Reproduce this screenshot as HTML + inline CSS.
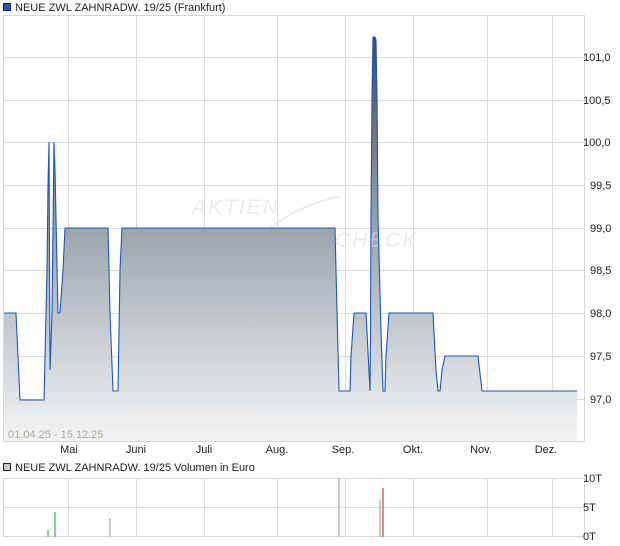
<!DOCTYPE html>
<html><head><meta charset="utf-8"><style>
html,body{margin:0;padding:0;background:#fff;}
svg{display:block;font-family:"Liberation Sans",sans-serif;}
</style></head><body>
<svg width="620" height="546" viewBox="0 0 620 546" xmlns="http://www.w3.org/2000/svg">
<defs>
<linearGradient id="g" gradientUnits="userSpaceOnUse" x1="0" y1="35" x2="0" y2="442">
<stop offset="0" stop-color="#3d4a54"/>
<stop offset="0.47" stop-color="#9aa4ab"/>
<stop offset="1" stop-color="#f4f5f6"/>
</linearGradient>
</defs>
<rect x="3.5" y="3.5" width="7" height="7" fill="#1a56c4" stroke="#222" stroke-width="1"/>
<text x="15" y="11" font-size="11" fill="#222">NEUE ZWL ZAHNRADW. 19/25 (Frankfurt)</text>
<g stroke="#dcdcdc" stroke-width="1">
<path d="M68.5 15V442M136.5 15V442M204.5 15V442M277.5 15V442M345.5 15V442M413.5 15V442M487.5 15V442M552.5 15V442"/>
<path d="M3 57.5H585M3 100.5H585M3 142.5H585M3 185.5H585M3 228.5H585M3 270.5H585M3 313.5H585M3 356.5H585M3 399.5H585"/>
</g>
<rect x="3.5" y="15.5" width="581" height="426" fill="none" stroke="#d6d6d6"/>
<path d="M4 313 L16 313 L20 400 L44 400 L46 313 L47 270 L48 185 L49 142 L50 370 L52 313 L54 142 L55 170 L58 313 L60 313 L63 270 L65 228 L108 228 L110 313 L113 391 L118 391 L120 270 L122 228 L335 228 L336 270 L339 391 L350 391 L351 356 L354 313 L366 313 L367 332 L370 391 L370.5 332 L371 213 L372 96 L373 37 L375 37 L376 40 L377 96 L378 216 L381 332 L383 391 L385 391 L386 356 L389 313 L433 313 L436 370 L438 391 L440 391 L442 370 L445 356 L478 356 L482 391 L577 391 L577 441 L4 441Z" fill="url(#g)"/>
<g opacity="0.55">
<text x="192" y="214" font-size="21" font-style="italic" fill="#e2dad2" letter-spacing="2">AKTIEN</text>
<text x="335" y="247" font-size="21" font-style="italic" fill="#e2dad2" letter-spacing="2">CHECK</text>
<path d="M270 228 Q300 205 340 196" stroke="#e2dad2" stroke-width="2" fill="none"/>
</g>
<path d="M4 313 L16 313 L20 400 L44 400 L46 313 L47 270 L48 185 L49 142 L50 370 L52 313 L54 142 L55 170 L58 313 L60 313 L63 270 L65 228 L108 228 L110 313 L113 391 L118 391 L120 270 L122 228 L335 228 L336 270 L339 391 L350 391 L351 356 L354 313 L366 313 L367 332 L370 391 L370.5 332 L371 213 L372 96 L373 37 L375 37 L376 40 L377 96 L378 216 L381 332 L383 391 L385 391 L386 356 L389 313 L433 313 L436 370 L438 391 L440 391 L442 370 L445 356 L478 356 L482 391 L577 391" fill="none" stroke="#1a56c4" stroke-width="1.1"/>
<g font-size="11" fill="#222">
<text x="583" y="61">101,0</text>
<text x="583" y="104">100,5</text>
<text x="583" y="146">100,0</text>
<text x="590" y="189">99,5</text>
<text x="590" y="232">99,0</text>
<text x="590" y="274">98,5</text>
<text x="590" y="317">98,0</text>
<text x="590" y="360">97,5</text>
<text x="590" y="403">97,0</text>
</g>
<text x="8" y="438" font-size="11" fill="#b4a898">01.04.25 - 15.12.25</text>
<g font-size="11" fill="#222" text-anchor="middle">
<text x="69" y="453">Mai</text>
<text x="136" y="453">Juni</text>
<text x="204" y="453">Juli</text>
<text x="277" y="453">Aug.</text>
<text x="343" y="453">Sep.</text>
<text x="413" y="453">Okt.</text>
<text x="481" y="453">Nov.</text>
<text x="546" y="453">Dez.</text>
</g>
<rect x="3.5" y="463.5" width="7" height="7" fill="#c8c8c8" stroke="#222"/>
<text x="15" y="471" font-size="11" fill="#222">NEUE ZWL ZAHNRADW. 19/25 Volumen in Euro</text>
<g stroke="#dcdcdc" stroke-width="1">
<path d="M68.5 478V536M136.5 478V536M204.5 478V536M277.5 478V536M345.5 478V536M413.5 478V536M487.5 478V536M552.5 478V536"/>
<path d="M3 507.5H585"/>
</g>
<rect x="3.5" y="478.5" width="581" height="58" fill="none" stroke="#d6d6d6"/>
<g stroke-width="1.5">
<path d="M48 530V537" stroke="#5ccc5c"/>
<path d="M55 512V537" stroke="#5ccc5c"/>
<path d="M110 518V537" stroke="#b8b8b8"/>
<path d="M339 478V537" stroke="#b8b8b8"/>
<path d="M380 500V537" stroke="#b8b8b8"/>
<path d="M383 488V537" stroke="#e06060"/>
</g>
<g font-size="11" fill="#222">
<text x="583" y="482">10T</text>
<text x="583" y="511">5T</text>
<text x="583" y="540">0T</text>
</g>
</svg>
</body></html>
